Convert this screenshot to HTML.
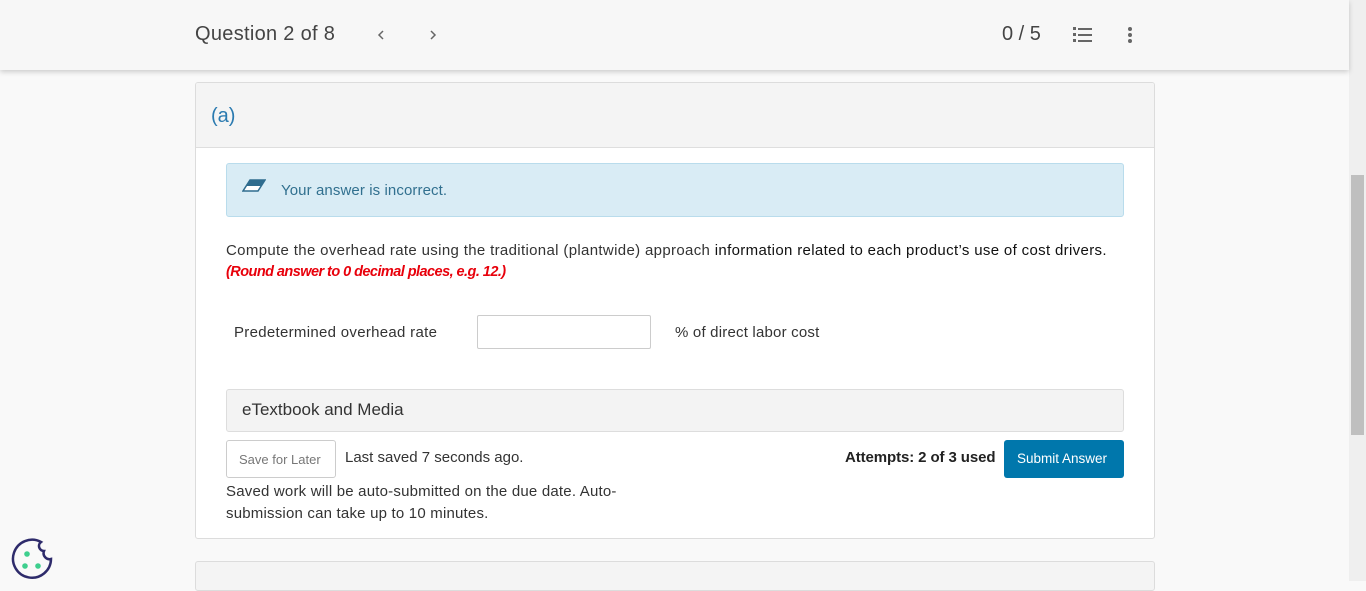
<!DOCTYPE html>
<html><head><meta charset="utf-8"><style>
*{margin:0;padding:0;box-sizing:border-box}
body{width:1366px;height:581px;overflow:hidden;background:#f9f9f9;font-family:"Liberation Sans",sans-serif;color:#333;position:relative}
.abs{position:absolute}
#hdr{left:0;top:0;width:1349px;height:70px;background:#f7f7f7;box-shadow:0 2px 5px rgba(0,0,0,.18);z-index:2}
#sb{left:1349px;top:0;width:17px;height:581px;background:#efefef}
#thumb{left:1351px;top:175px;width:13px;height:260px;background:#bfbfbf}
#card{left:195px;top:82px;width:960px;height:457px;background:#fff;border:1px solid #dcdcdc;border-radius:3px;overflow:hidden}
#chd{left:0;top:0;width:958px;height:65px;background:#f4f4f4;border-bottom:1px solid #dedede}
.t{position:absolute;white-space:nowrap}
</style></head><body>
<div id="hdr" class="abs">
 <div class="t" style="left:195px;top:23px;font-size:20px;color:#444;letter-spacing:.3px">Question 2 of 8</div>
 <svg class="abs" style="left:375px;top:28px" width="12" height="14"><path d="M8 3 L4 7 L8 11" stroke="#666" stroke-width="1.5" fill="none"/></svg>
 <svg class="abs" style="left:427px;top:28px" width="12" height="14"><path d="M4 3 L8 7 L4 11" stroke="#666" stroke-width="1.5" fill="none"/></svg>
 <div class="t" style="left:1002px;top:23px;font-size:20px;color:#444">0 / 5</div>
 <svg class="abs" style="left:1072px;top:26px" width="22" height="18"><g fill="#666"><rect x="6" y="2" width="14" height="2"/><rect x="6" y="8" width="14" height="2"/><rect x="6" y="14" width="14" height="2"/><rect x="1" y="1" width="3" height="3"/><rect x="1" y="7" width="3" height="3"/><rect x="1" y="13" width="3" height="3"/></g></svg>
 <svg class="abs" style="left:1126px;top:26px" width="8" height="18"><g fill="#666"><circle cx="4" cy="3" r="2"/><circle cx="4" cy="9" r="2"/><circle cx="4" cy="15" r="2"/></g></svg>
</div>
<div id="sb" class="abs"></div><div id="thumb" class="abs"></div>
<div id="card" class="abs">
 <div id="chd" class="abs"><div class="t" style="left:15px;top:22px;font-size:20px;color:#2a7ab0">(a)</div></div>
 <div class="abs" style="left:30px;top:80px;width:898px;height:54px;background:#d9ecf5;border:1px solid #b9dcec;border-radius:3px">
  <svg class="abs" style="left:15px;top:15px" width="24" height="14"><path d="M8 1 L23 1 L16 12 L1 12 Z" fill="#fff" stroke="#2f6c8e" stroke-width="1.5"/><path d="M8 1 L23 1 L19 7 L4 7 Z" fill="#2f6c8e"/></svg>
  <div class="t" style="left:54px;top:18px;font-size:15px;color:#31708f;letter-spacing:.1px">Your answer is incorrect.</div>
 </div>
 <div class="t" style="left:30px;top:159px;font-size:15px;color:#333;letter-spacing:.34px">Compute the overhead rate using the traditional (plantwide) approach <span style="color:#111">information related to each product’s use of cost drivers.</span></div>
 <div class="t" style="left:30px;top:181px;font-size:14.5px;color:#e8000b;font-weight:bold;font-style:italic;letter-spacing:-.55px">(Round answer to 0 decimal places, e.g. 12.)</div>
 <div class="t" style="left:38px;top:241px;font-size:15px;color:#333;letter-spacing:.3px">Predetermined overhead rate</div>
 <div class="abs" style="left:281px;top:232px;width:174px;height:34px;border:1px solid #ccc;border-radius:2px;background:#fff"></div>
 <div class="t" style="left:479px;top:241px;font-size:15px;color:#333;letter-spacing:.2px">% of direct labor cost</div>
 <div class="abs" style="left:30px;top:306px;width:898px;height:43px;background:#f3f3f3;border:1px solid #ddd;border-radius:3px"><div class="t" style="left:15px;top:10px;font-size:17px;color:#333">eTextbook and Media</div></div>
 <div class="abs" style="left:30px;top:357px;width:110px;height:38px;border:1px solid #ccc;border-radius:3px;background:#fff"><div class="t" style="left:12px;top:11px;font-size:13px;color:#777">Save for Later</div></div>
 <div class="t" style="left:149px;top:366px;font-size:15px;color:#333">Last saved 7 seconds ago.</div>
 <div class="t" style="left:30px;top:398px;font-size:15px;color:#333;line-height:22px;letter-spacing:.2px">Saved work will be auto-submitted on the due date. Auto-<br>submission can take up to 10 minutes.</div>
 <div class="t" style="left:649px;top:366px;font-size:15px;color:#222;font-weight:bold;letter-spacing:-.1px">Attempts: 2 of 3 used</div>
 <div class="abs" style="left:808px;top:357px;width:120px;height:38px;background:#0077ac;border-radius:3px"><div class="t" style="left:13px;top:11px;font-size:13.5px;color:#fff">Submit Answer</div></div>
</div>
<div class="abs" style="left:195px;top:561px;width:960px;height:30px;background:#f4f4f4;border:1px solid #dcdcdc;border-radius:3px"></div>
<svg class="abs" style="left:10px;top:538px" width="44" height="43"><path d="M31 4 A19 19 0 1 0 41 21 A6 6 0 0 1 34 13 A5 5 0 0 1 31 4 Z" fill="none" stroke="#2e2b6b" stroke-width="2.5"/><g fill="#3ecf8e"><circle cx="17" cy="16" r="2.8"/><circle cx="15" cy="28" r="2.8"/><circle cx="28" cy="28" r="2.8"/></g></svg>
</body></html>
